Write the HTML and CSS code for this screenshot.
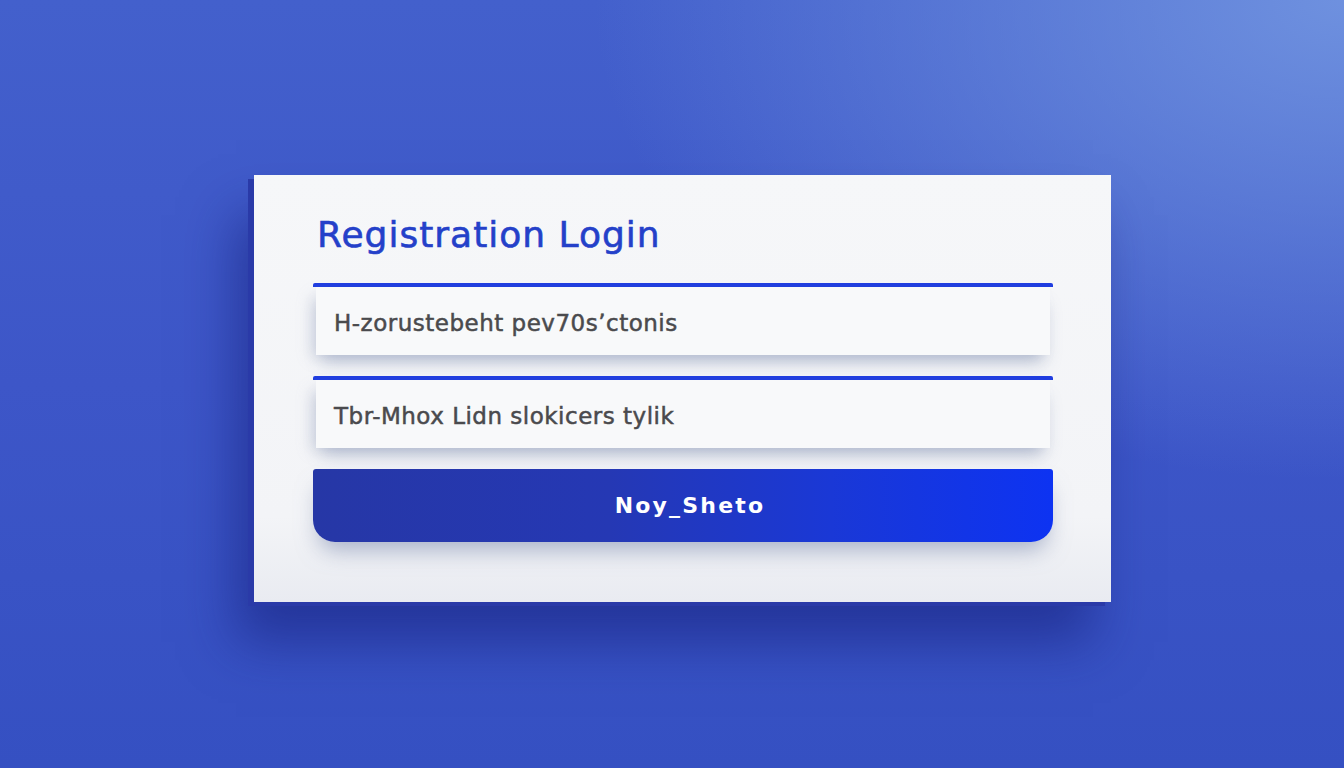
FILE: index.html
```html
<!DOCTYPE html>
<html lang="en">
<head>
	<meta charset="utf-8">
	<title>Registration Login</title>
	<link rel="stylesheet" href="styles.css">
</head>
<body>
	<div class="card">
		<h1 class="title">Registration Login</h1>
		<div class="field">
			<div class="field-box">H-zorustebeht pev70s&#700;ctonis</div>
		</div>
		<div class="field">
			<div class="field-box">Tbr-Mhox Lidn slokicers tylik</div>
		</div>
		<div class="btn">Noy_Sheto</div>
	</div>
</body>
</html>
```

FILE: styles.css
```css
* {padding: 0; margin: 0; box-sizing: border-box;}
html, body {height: 100%;}
body {
	font-family: "DejaVu Sans", "Liberation Sans", sans-serif;
	background:
		radial-gradient(ellipse 750px 480px at 1344px 0px, rgba(115,150,225,0.9), rgba(115,150,225,0) 100%),
		linear-gradient(180deg, #4360cc 0%, #3d56c8 50%, #3550c2 100%);
	padding: 175px 0 0 254px;
	overflow: hidden;
}
.card {
	width: 857px;
	height: 427px;
	background: linear-gradient(180deg, #f6f7f9 0%, #f3f4f7 80%, #e9ebf1 100%);
	padding: 40px 58px 0 59px;
	box-shadow: -6px 4px 0 #2a3aa8, -18px 40px 50px rgba(20,30,120,0.55);
}
.title {
	font-size: 36px;
	line-height: 40px;
	font-weight: normal;
	color: #2440c9;
	padding-left: 4px;
	letter-spacing: 1px;
	-webkit-text-stroke: 0.6px #2440c9;
}
.field {
	margin-top: 28px;
	border-top: 4px solid #1f3de0;
	border-radius: 2px 2px 0 0;
	padding: 0 3px;
}
.field + .field {margin-top: 21px;}
.field-box {
	height: 68px;
	background: #f8f9fa;
	padding-left: 18px;
	padding-top: 3px;
	display: flex;
	align-items: center;
	font-size: 23px;
	color: #4a4a4d;
	letter-spacing: 0.5px;
	-webkit-text-stroke: 0.5px #4a4a4d;
	box-shadow: 0 12px 16px -6px rgba(120,135,170,0.45), -8px 6px 14px -4px rgba(150,160,190,0.35);
}
.btn {
	margin-top: 21px;
	height: 73px;
	border-radius: 3px 3px 22px 22px;
	background: linear-gradient(90deg, #2637a6 0%, #2538b4 40%, #1a38d6 70%, #0d33f2 100%);
	color: #fff;
	font-size: 22px;
	font-weight: bold;
	display: flex;
	align-items: center;
	justify-content: center;
	padding-left: 14px;
	letter-spacing: 2.2px;
	box-shadow: 0 14px 22px -6px rgba(110,125,165,0.55);
}
```
